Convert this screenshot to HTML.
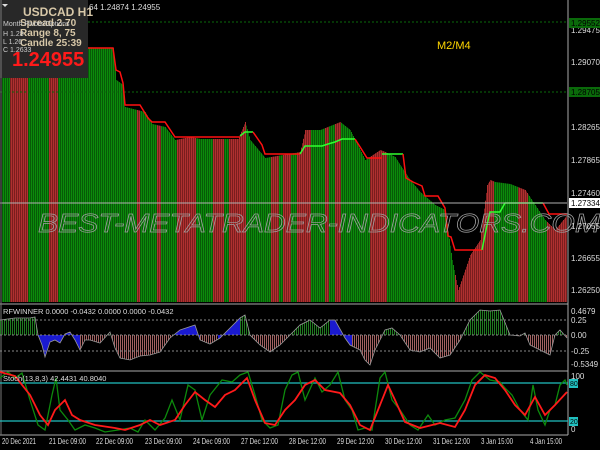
<!DOCTYPE html>
<html><head><meta charset="utf-8"><style>
html,body{margin:0;padding:0;background:#000;width:600px;height:450px;overflow:hidden}
svg{display:block}
text{font-family:"Liberation Sans",sans-serif}
</style></head><body>
<svg id="s" width="600" height="450" xmlns="http://www.w3.org/2000/svg">
<rect width="600" height="450" fill="#000"/>
<g id="bars"></g>
<line x1="0" y1="22" x2="567" y2="22" stroke="#0a6a0a" stroke-dasharray="2,2"/>
<line x1="0" y1="92" x2="567" y2="92" stroke="#0a6a0a" stroke-dasharray="2,2"/>
<polyline fill="none" stroke="#ff1010" stroke-width="1.5" points="88,48 113,48 116,70 120,72 123,83 125,105 140,105 148,118 152,122 165,122 175,137 240,137"/>
<polyline fill="none" stroke="#30ff30" stroke-width="1.5" points="240,136 245,132 253,132"/>
<polyline fill="none" stroke="#ff1010" stroke-width="1.5" points="253,132 262,145 265,154 300,154"/>
<polyline fill="none" stroke="#30ff30" stroke-width="1.5" points="300,154 305,146 322,146 328,144 335,142 342,139 355,139"/>
<polyline fill="none" stroke="#ff1010" stroke-width="1.5" points="355,139 362,150 367,158 382,158"/>
<polyline fill="none" stroke="#30ff30" stroke-width="1.5" points="382,154 403,154"/>
<polyline fill="none" stroke="#ff1010" stroke-width="1.5" points="403,154 406,178 413,182 422,186 425,196 438,196 445,208 448,236 451,237 455,250 482,250"/>
<polyline fill="none" stroke="#30ff30" stroke-width="1.5" points="482,250 487,225 490,212 500,212 505,203 543,203"/>
<polyline fill="none" stroke="#ff1010" stroke-width="1.5" points="543,203 549,214 567,214"/>
<line x1="0" y1="203" x2="567" y2="203" stroke="#b0b0b0" stroke-width="1"/>
<text x="38" y="232" font-size="26" font-style="italic" fill="none" stroke="#a0a0a0" stroke-width="0.7" textLength="562" lengthAdjust="spacingAndGlyphs">BEST-METATRADER-INDICATORS.COM</text>
<text x="437" y="49" font-size="11" fill="#ffd700">M2/M4</text>
<rect x="0" y="0" width="88" height="78" fill="#282828"/>
<path d="M2 4 L8 4 L5 7Z" fill="#ddd"/>
<text x="23" y="16" font-size="12" font-weight="bold" fill="#d8c8a8">USDCAD  H1</text>
<text x="20" y="26" font-size="10" font-weight="bold" fill="#d8c8a8">Spread  2.70</text>
<text x="20" y="36" font-size="10" font-weight="bold" fill="#d8c8a8">Range   8, 75</text>
<text x="20" y="46" font-size="10" font-weight="bold" fill="#d8c8a8">Candle  25:39</text>
<text x="3" y="26" font-size="7" fill="#ccc">Month Pivots/Options</text>
<text x="3" y="36" font-size="7" fill="#ccc">H 1.28</text>
<text x="3" y="44" font-size="7" fill="#ccc">L 1.26</text>
<text x="3" y="52" font-size="7" fill="#ccc">C 1.2633</text>
<text x="12" y="66" font-size="20" font-weight="bold" fill="#ff1a1a">1.24955</text>
<text x="89" y="10" font-size="8" fill="#ddd">64 1.24874 1.24955</text>
<line x1="568" y1="0" x2="568" y2="435" stroke="#aaa"/>
<line x1="0" y1="304" x2="568" y2="304" stroke="#aaa"/>
<line x1="0" y1="371" x2="568" y2="371" stroke="#aaa"/>
<line x1="0" y1="435" x2="568" y2="435" stroke="#aaa"/>
<line x1="1" y1="0" x2="1" y2="435" stroke="#777"/>
<g font-size="8" fill="#ddd">
<text x="571" y="33">1.29475</text>
<text x="571" y="65">1.29070</text>
<text x="571" y="130">1.28265</text>
<text x="571" y="163">1.27865</text>
<text x="571" y="196">1.27460</text>
<text x="571" y="229">1.27055</text>
<text x="571" y="261">1.26655</text>
<text x="571" y="293">1.26250</text>
</g>
<rect x="569" y="18" width="31" height="10" fill="#0a6a0a"/><text x="571" y="26" font-size="8" fill="#000">1.29552</text>
<rect x="569" y="87" width="31" height="10" fill="#0a6a0a"/><text x="571" y="95" font-size="8" fill="#000">1.28705</text>
<rect x="569" y="198" width="31" height="10" fill="#fff"/><text x="571" y="206" font-size="8" fill="#000">1.27334</text>
<defs>
<clipPath id="up"><rect x="0" y="305" width="568" height="30"/></clipPath>
<clipPath id="dn"><rect x="0" y="335" width="568" height="35"/></clipPath>
<clipPath id="poly"><polygon id="pp" points="0,335 1,335"/></clipPath>
<pattern id="gp" width="2" height="4" patternUnits="userSpaceOnUse"><rect width="1" height="4" fill="#1f7a1f"/></pattern>
<pattern id="rp" width="2" height="4" patternUnits="userSpaceOnUse"><rect width="1" height="4" fill="#a06060"/></pattern>
</defs>
<g id="sub1"></g>
<line x1="0" y1="320" x2="568" y2="320" stroke="#888" stroke-dasharray="2,2"/>
<line x1="0" y1="351" x2="568" y2="351" stroke="#888" stroke-dasharray="2,2"/>
<text x="3" y="314" font-size="7.5" fill="#ddd">RFWINNER 0.0000 -0.0432 0.0000 0.0000 -0.0432</text>
<g font-size="8" fill="#ddd">
<text x="571" y="314">0.4679</text><text x="571" y="323">0.25</text><text x="571" y="338">0.00</text><text x="571" y="354">-0.25</text><text x="571" y="367">-0.5349</text>
</g>
<line x1="0" y1="383" x2="568" y2="383" stroke="#20c0c0" stroke-width="1.2"/>
<line x1="0" y1="421" x2="568" y2="421" stroke="#20c0c0" stroke-width="1.2"/>
<g id="sub2"></g>
<text x="3" y="381" font-size="7.5" fill="#ddd">Stoch(13,8,3) 42.4431 40.8040</text>
<g font-size="8" fill="#ddd"><text x="571" y="379">100</text><text x="571" y="432">0</text></g>
<rect x="569" y="379" width="9" height="9" fill="#20c0c0"/><text x="570" y="386" font-size="7" fill="#000">80</text>
<rect x="569" y="417" width="9" height="9" fill="#20c0c0"/><text x="570" y="424" font-size="7" fill="#000">20</text>
<g font-size="8" fill="#ddd">
<text x="2" y="444" textLength="34" lengthAdjust="spacingAndGlyphs">20 Dec 2021</text>
<text x="49" y="444" textLength="37" lengthAdjust="spacingAndGlyphs">21 Dec 09:00</text>
<text x="96" y="444" textLength="37" lengthAdjust="spacingAndGlyphs">22 Dec 09:00</text>
<text x="145" y="444" textLength="37" lengthAdjust="spacingAndGlyphs">23 Dec 09:00</text>
<text x="193" y="444" textLength="37" lengthAdjust="spacingAndGlyphs">24 Dec 09:00</text>
<text x="241" y="444" textLength="37" lengthAdjust="spacingAndGlyphs">27 Dec 12:00</text>
<text x="289" y="444" textLength="37" lengthAdjust="spacingAndGlyphs">28 Dec 12:00</text>
<text x="337" y="444" textLength="37" lengthAdjust="spacingAndGlyphs">29 Dec 12:00</text>
<text x="385" y="444" textLength="37" lengthAdjust="spacingAndGlyphs">30 Dec 12:00</text>
<text x="433" y="444" textLength="37" lengthAdjust="spacingAndGlyphs">31 Dec 12:00</text>
<text x="481" y="444" textLength="32" lengthAdjust="spacingAndGlyphs">3 Jan 15:00</text>
<text x="530" y="444" textLength="32" lengthAdjust="spacingAndGlyphs">4 Jan 15:00</text>
</g>
</svg>
<script>
(function(){
function interp(pts,x){for(var i=0;i<pts.length-1;i++){if(x>=pts[i][0]&&x<=pts[i+1][0]){var t=(x-pts[i][0])/(pts[i+1][0]-pts[i][0]||1);return pts[i][1]+t*(pts[i+1][1]-pts[i][1]);}}return pts[pts.length-1][1];}
var tp=[[0,45],[113,48],[116,80],[123,85],[125,107],[145,112],[152,124],[165,127],[175,140],[190,137],[200,139],[238,139],[245,122],[250,140],[265,158],[300,152],[305,130],[320,130],[340,122],[350,130],[365,160],[380,150],[385,152],[395,157],[400,165],[410,180],[420,192],[435,205],[445,210],[452,260],[458,290],[470,255],[480,240],[487,185],[490,180],[495,182],[510,184],[525,190],[545,220],[555,230],[567,215]];
var reds=[[10,27],[49,57],[137,139],[157,160],[177,195],[213,223],[229,245],[271,278],[283,290],[297,310],[325,328],[335,340],[370,386],[455,493],[518,527],[547,567]];
function isRed(x){for(var i=0;i<reds.length;i++)if(x>=reds[i][0]&&x<=reds[i][1])return true;return false;}
var g=document.getElementById("bars"),h="";
for(var x=2;x<567;x++){var y=interp(tp,x);var r=isRed(x);var c=r?(x%2?"#b03030":"#7a1e1e"):(x%2?"#0c8a0c":"#075a07");h+='<rect x="'+x+'" y="'+y.toFixed(1)+'" width="1" height="'+(302-y).toFixed(1)+'" fill="'+c+'"/>';}
g.innerHTML=h;
var s1=[[0,320],[15,318],[30,318],[35,317],[38,335],[42,345],[45,357],[50,342],[55,340],[60,343],[65,334],[70,332],[75,340],[80,350],[85,340],[90,340],[100,343],[110,332],[115,348],[120,358],[130,360],[140,356],[150,355],[160,352],[170,338],[180,330],[195,325],[200,340],[210,344],[220,338],[232,326],[240,318],[245,315],[250,335],[260,345],[270,352],[280,345],[290,335],[300,325],[310,320],[320,328],[330,320],[335,320],[345,338],[350,345],[360,350],[365,360],[370,365],[375,350],[380,340],[385,330],[392,328],[400,335],[410,350],[420,352],[430,348],[440,358],[450,355],[460,340],[470,320],[480,310],[490,311],[500,310],[510,335],[520,336],[525,333],[530,345],[540,350],[550,355],[555,335],[560,330],[567,338]];
function pl(a){return a.map(function(p){return p.join(",")}).join(" ")}
document.getElementById("pp").setAttribute("points",pl(s1)+" 567,335 0,335");
var b='<g clip-path="url(#poly)"><rect x="0" y="305" width="568" height="30" fill="url(#gp)" clip-path="url(#up)"/><rect x="0" y="335" width="568" height="35" fill="url(#rp)" clip-path="url(#dn)"/>';
[[38,80],[175,200],[218,240],[330,352]].forEach(function(r){b+='<rect x="'+r[0]+'" y="305" width="'+(r[1]-r[0])+'" height="65" fill="#1a1ad0"/>';});
b+='</g><polyline fill="none" stroke="#999" stroke-width="0.8" points="'+pl(s1)+'"/><line x1="0" y1="335" x2="568" y2="335" stroke="#888" stroke-dasharray="2,2"/>';
document.getElementById("sub1").innerHTML=b;
var red=[[0,372],[15,376],[30,395],[40,415],[48,425],[55,410],[65,400],[72,415],[80,420],[95,425],[115,428],[125,430],[140,425],[150,420],[160,425],[175,420],[185,405],[195,392],[205,400],[215,407],[225,395],[235,390],[247,378],[255,400],[265,423],[275,425],[285,410],[295,400],[305,385],[315,380],[325,390],[340,393],[350,405],[360,425],[370,430],[380,405],[388,385],[395,400],[405,422],[420,428],[440,423],[455,427],[465,410],[475,385],[485,375],[495,378],[505,390],[515,405],[525,415],[535,397],[545,415],[555,405],[567,392]];
var green=[[0,378],[8,372],[15,378],[22,373],[30,400],[38,425],[45,430],[52,395],[56,378],[60,410],[68,420],[75,430],[85,425],[95,428],[105,432],[118,430],[130,428],[138,432],[145,420],[155,430],[165,418],[172,400],[180,420],[188,385],[195,390],[202,420],[210,395],[222,380],[232,382],[240,375],[248,372],[255,395],[262,420],[270,428],[278,425],[285,390],[292,375],[298,372],[305,400],[315,378],[322,392],[330,385],[338,372],[345,400],[352,410],[358,430],[365,428],[372,430],[380,378],[385,372],[392,400],[400,410],[410,425],[418,430],[428,415],[435,425],[445,420],[455,418],[465,400],[472,380],[480,372],[490,380],[500,382],[505,388],[512,395],[520,410],[528,420],[533,385],[538,410],[545,425],[550,410],[555,405],[560,385],[565,380],[567,385]];
document.getElementById("sub2").innerHTML='<polyline fill="none" stroke="#0d8a0d" stroke-width="1.3" points="'+pl(green)+'"/><polyline fill="none" stroke="#ff1a1a" stroke-width="1.8" points="'+pl(red)+'"/>';
})();
</script>
</body></html>
